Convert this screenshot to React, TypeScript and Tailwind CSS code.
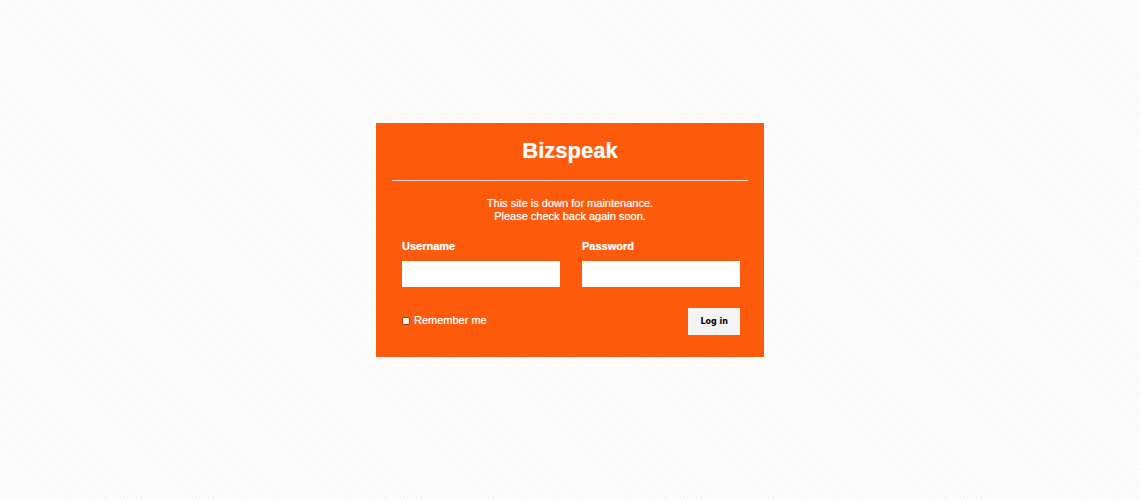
import { useState, type FormEvent } from "react";

type FieldProps = {
  id: string;
  label: string;
  type: "text" | "password";
  autoComplete: string;
};

function Field({ id, label, type, autoComplete }: FieldProps) {
  return (
    <div className="flex min-w-0 flex-1 flex-col gap-2">
      <label htmlFor={id} className="font-bold">
        {label}
      </label>
      <input
        id={id}
        name={id}
        type={type}
        autoComplete={autoComplete}
        className="h-[26px] w-full bg-white px-2 text-black outline-none focus-visible:ring-2 focus-visible:ring-black/40"
      />
    </div>
  );
}

export default function App() {
  const [remember, setRemember] = useState(false);

  const handleSubmit = (event: FormEvent<HTMLFormElement>) => {
    event.preventDefault();
  };

  return (
    <div className="min-h-screen bg-[#fcfcfc] bg-[repeating-linear-gradient(45deg,#fdfdfd_0px,#fdfdfd_2px,#f8f8f8_2px,#f8f8f8_3px)] px-4 pt-[123px] pb-16 font-['Liberation_Sans',Arial,sans-serif] text-[11px] leading-[13px] text-white">
      <main className="mx-auto max-w-[388px] bg-[#fd5b0b] px-4 pt-4 pb-[22px] [text-shadow:0_0_1px_rgba(255,255,255,0.6)]">
        <h1 className="border-b border-white/80 pb-[17px] text-center text-[22px] leading-6 font-bold">
          Bizspeak
        </h1>
        <p className="mt-4 text-center">
          This site is down for maintenance.
          <br />
          Please check back again soon.
        </p>
        <form onSubmit={handleSubmit} className="mt-[17px] pr-2 pl-[10px]">
          <div className="flex gap-[22px]">
            <Field id="username" label="Username" type="text" autoComplete="username" />
            <Field id="password" label="Password" type="password" autoComplete="current-password" />
          </div>
          <div className="mt-[21px] flex items-start justify-between">
            <label htmlFor="remember" className="mt-[6px] flex items-center gap-1">
              <input
                id="remember"
                name="remember"
                type="checkbox"
                checked={remember}
                onChange={(event) => setRemember(event.target.checked)}
                className="size-2 appearance-none rounded-xs border border-[#a8420f] bg-[#f3f3f3] checked:bg-[#333]"
              />
              Remember me
            </label>
            <button
              type="submit"
              className="h-[27px] bg-[#f4f4f4] px-3 font-['DejaVu_Sans',Verdana,sans-serif] text-[8px] font-bold text-black text-shadow-none"
            >
              Log in
            </button>
          </div>
        </form>
      </main>
    </div>
  );
}
